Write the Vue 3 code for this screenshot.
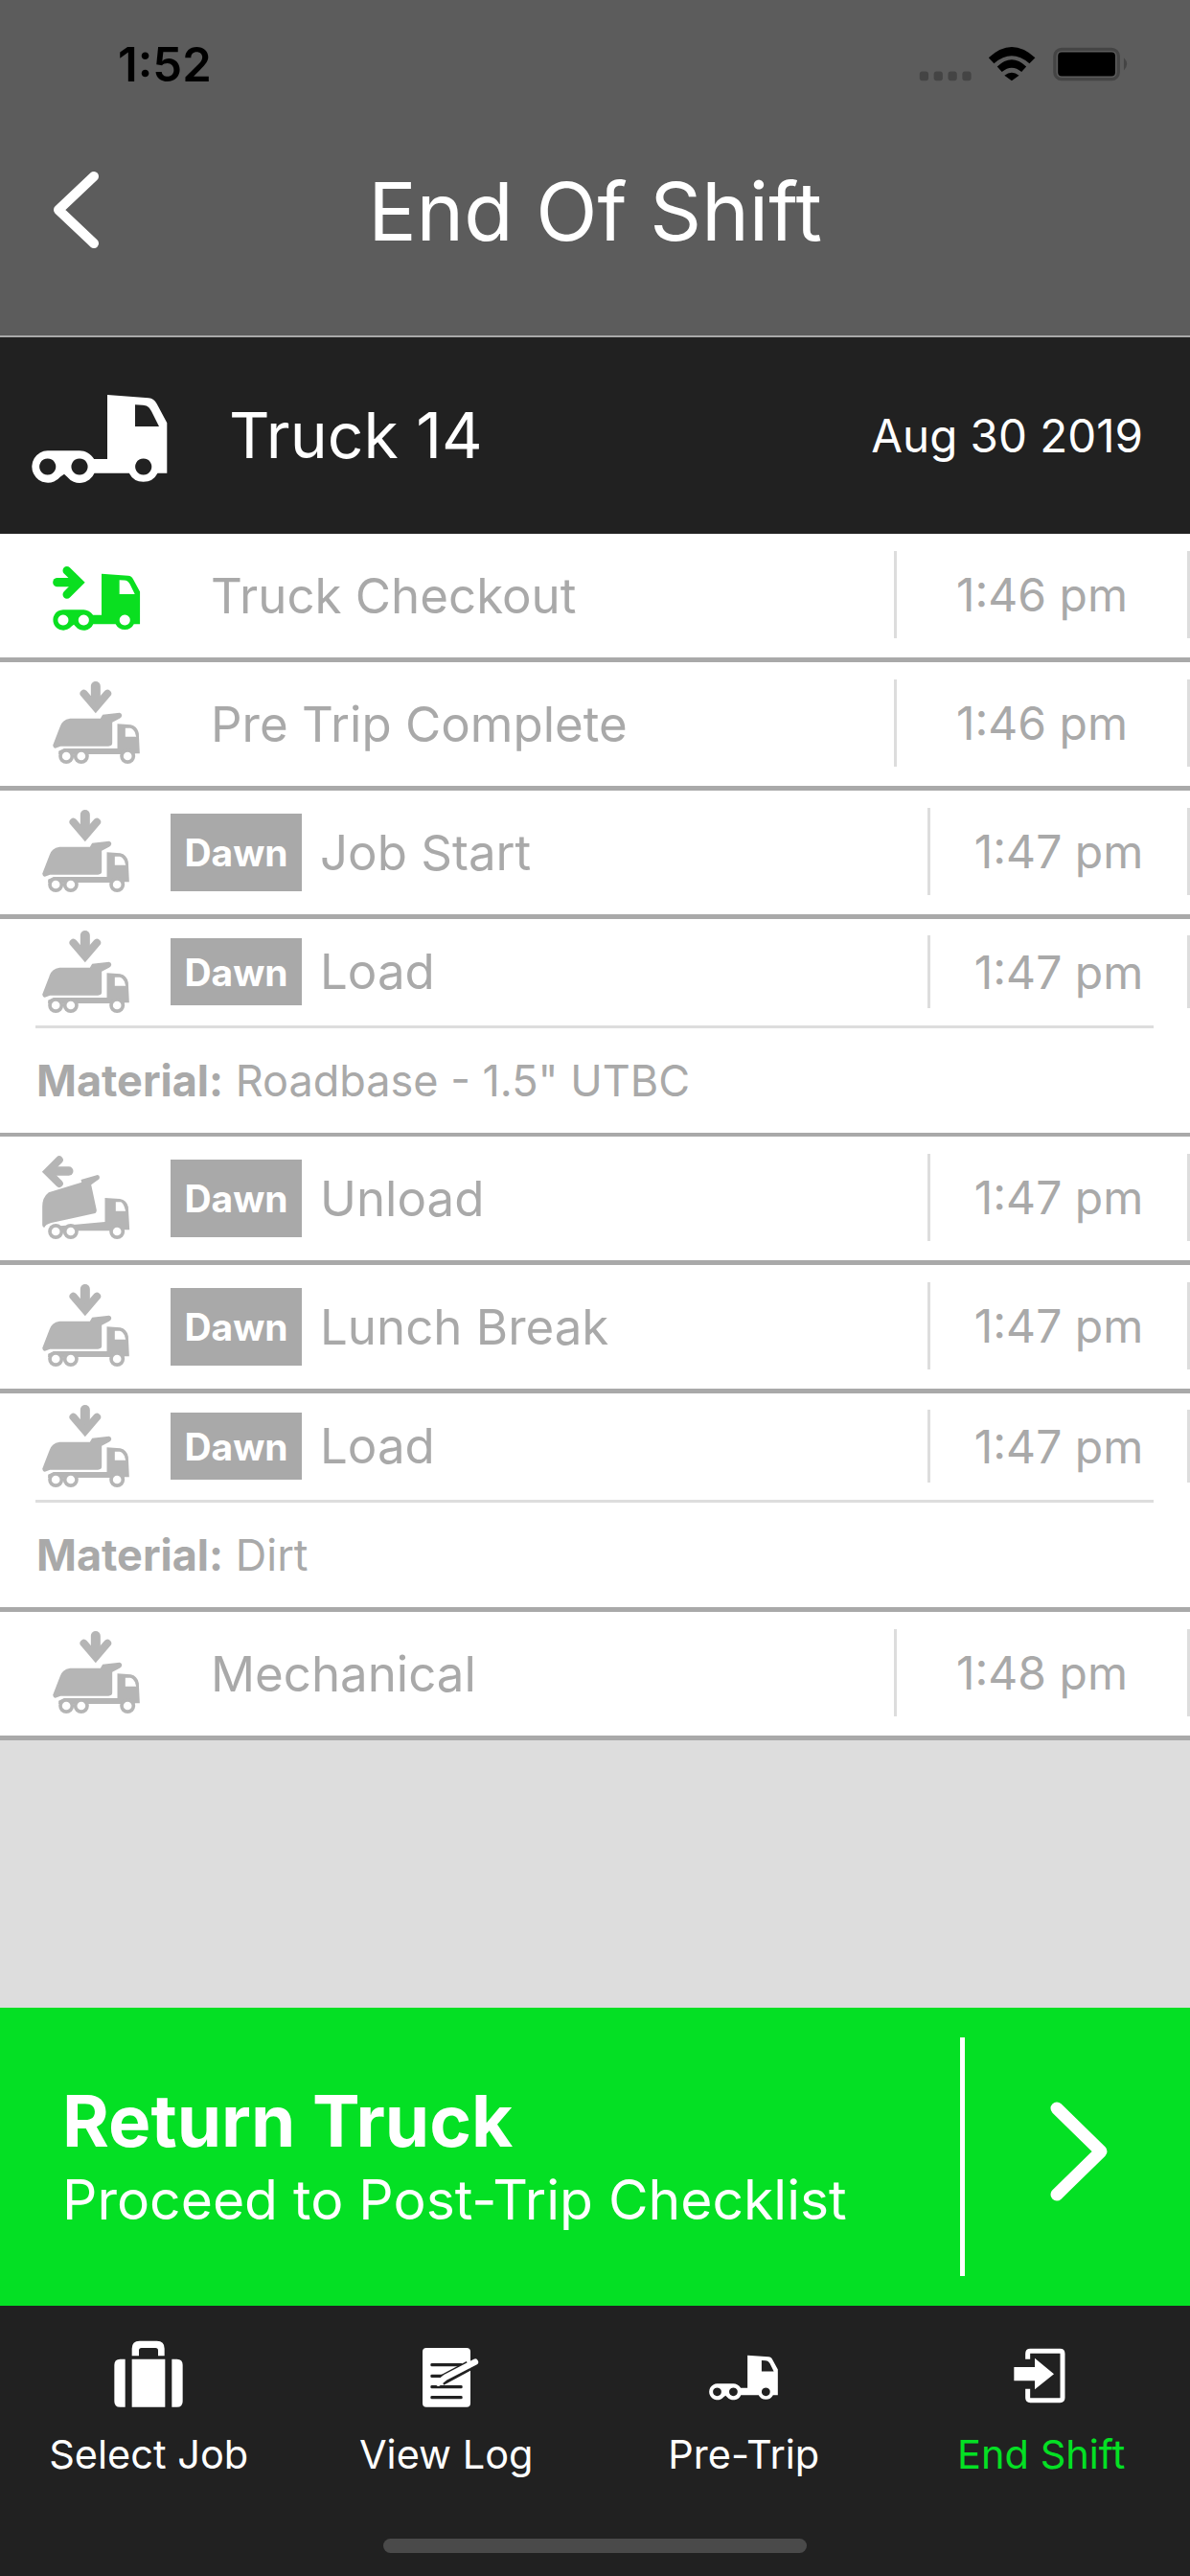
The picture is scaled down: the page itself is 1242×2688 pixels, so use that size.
<script setup>
const cab = 'M79 0L122 3.3C126 3.6 128.5 5.5 130.6 9.3L141.3 29.3V81.7H131.5A16.7 16.7 0 0 1 101.8 81.7H65.5A16.7 16.7 0 0 1 37 85.5L34 82.7L30 85.5A16.7 16.7 0 1 1 16.7 58.3H50C56 58.3 61.5 61.5 65.2 67H79ZM108 10.3V33H133L125 17C122.5 12.5 120 11 116 10.8ZM16.7 66.4A8.6 8.6 0 1 0 16.71 66.4ZM50 66.4A8.6 8.6 0 1 0 50.01 66.4ZM116.7 66.4A8.6 8.6 0 1 0 116.71 66.4Z'

const rows = [
  { icon: 'checkout', label: 'Truck Checkout', time: '1:46 pm' },
  { icon: 'load', label: 'Pre Trip Complete', time: '1:46 pm' },
  { icon: 'load', badge: 'Dawn', label: 'Job Start', time: '1:47 pm' },
  { icon: 'load', badge: 'Dawn', label: 'Load', time: '1:47 pm', material: 'Roadbase - 1.5" UTBC', thinBorder: true },
  { icon: 'unload', badge: 'Dawn', label: 'Unload', time: '1:47 pm' },
  { icon: 'load', badge: 'Dawn', label: 'Lunch Break', time: '1:47 pm' },
  { icon: 'load', badge: 'Dawn', label: 'Load', time: '1:47 pm', material: 'Dirt' },
  { icon: 'load', label: 'Mechanical', time: '1:48 pm' },
]
</script>

<template>
  <div class="screen">
    <header class="top">
      <div class="status">
        <span class="clock">1:52</span>
        <svg class="status-icons" viewBox="170 85 665 115" aria-hidden="true">
          <g fill="#444">
            <rect x="175" y="165" width="28" height="30" rx="9" />
            <rect x="220" y="165" width="28" height="30" rx="9" />
            <rect x="265" y="165" width="28" height="30" rx="9" />
            <rect x="310" y="165" width="28" height="30" rx="9" />
          </g>
          <path d="M393 122Q466 54 540 122L522 140Q466 92 410 140ZM420 150Q466 106 512 150L497 167Q466 140 435 167ZM443 178Q466 160 489 178L466 195Z" fill="#000" />
          <rect x="602" y="95" width="201" height="95" rx="22" fill="none" stroke="#444" stroke-width="10" />
          <rect x="612" y="105" width="181" height="75" rx="12" fill="#000" />
          <path d="M820 122Q830 132 830 142Q830 152 820 162Z" fill="#444" />
        </svg>
      </div>
      <div class="nav">
        <svg class="back" viewBox="0 0 48 80" aria-hidden="true">
          <path d="M43 5L6 40L43 75" fill="none" stroke="#fff" stroke-width="10" stroke-linecap="round" stroke-linejoin="round" />
        </svg>
        <h1 class="title">End Of Shift</h1>
      </div>
    </header>

    <section class="truck-bar">
      <svg class="truck-icon" viewBox="0 0 142 92" aria-hidden="true">
        <path :d="cab" fill="#fff" fill-rule="evenodd" />
      </svg>
      <span class="truck-name">Truck 14</span>
      <span class="truck-date">Aug 30 2019</span>
    </section>

    <main class="list">
      <article
        v-for="(row, i) in rows"
        :key="i"
        class="row"
        :class="{ 'row-thin': row.thinBorder }"
      >
        <div class="row-main" :class="{ 'has-badge': row.badge, 'has-material': row.material }">
          <svg v-if="row.icon === 'checkout'" class="row-icon" viewBox="76 20 272 258" aria-hidden="true">
            <g fill="none" stroke="#0adf20" stroke-linecap="round">
              <path d="M90 112H150" stroke-width="28" />
              <path d="M120 75L158 112L120 150" stroke-width="26" stroke-linejoin="miter" />
            </g>
            <path :d="cab" transform="translate(76 85) scale(1.93)" fill="#0adf20" fill-rule="evenodd" />
          </svg>
          <svg v-else-if="row.icon === 'load'" class="row-icon" viewBox="76 62 272 258" aria-hidden="true">
            <g fill="none" stroke="#b5b5b5" stroke-linecap="round">
              <path d="M210 77V130" stroke-width="30" />
              <path d="M173 100L210 143L247 100" stroke-width="24" />
            </g>
            <g fill="#b5b5b5">
              <path d="M76 262L98 205Q104 182 130 178H225L232 166L285 160Q293 162 292 170Q290 176 285 178L262 190V255Q262 265 250 265H100L84 271Q78 272 76 262Z" />
              <path d="M278 195L320 198Q340 202 345 225L348 288H332V290H94V280L112 272H278Z" />
              <circle cx="118" cy="296" r="24" />
              <circle cx="165" cy="296" r="24" />
              <circle cx="310" cy="296" r="24" />
            </g>
            <g fill="#fff">
              <path d="M303 208H318Q328 210 333 222L337 235H303Z" />
              <circle cx="118" cy="296" r="13" />
              <circle cx="165" cy="296" r="13" />
              <circle cx="310" cy="296" r="13" />
            </g>
          </svg>
          <svg v-else class="row-icon" viewBox="42 45 272 258" aria-hidden="true">
            <g fill="none" stroke="#b5b5b5" stroke-linecap="round">
              <path d="M125 93H72" stroke-width="28" />
              <path d="M95 58L58 95L95 132" stroke-width="24" />
            </g>
            <g fill="#b5b5b5">
              <path d="M42 262V205Q42 175 62 160L165 128L163 120L215 105Q224 106 220 118L195 136L212 215Q212 224 204 226L70 255Q52 260 48 270Q43 270 42 262Z" />
              <path d="M238 177L285 180Q306 184 311 205L315 277H295V280H75V276L65 268L238 252Z" />
              <circle cx="84" cy="282" r="24" />
              <circle cx="131" cy="282" r="24" />
              <circle cx="276" cy="282" r="24" />
            </g>
            <g fill="#fff">
              <path d="M272 190H288Q296 193 303 218H272Z" />
              <circle cx="84" cy="282" r="13" />
              <circle cx="131" cy="282" r="13" />
              <circle cx="276" cy="282" r="13" />
            </g>
          </svg>
          <span v-if="row.badge" class="badge">{{ row.badge }}</span>
          <span class="label">{{ row.label }}</span>
          <span class="time">{{ row.time }}</span>
        </div>
        <p v-if="row.material" class="material"><b>Material:</b> {{ row.material }}</p>
      </article>
    </main>

    <button class="action" type="button">
      <span class="action-text">
        <strong>Return Truck</strong>
        <span>Proceed to Post-Trip Checklist</span>
      </span>
      <svg class="action-arrow" viewBox="0 0 60 104" aria-hidden="true">
        <path d="M7 7L53 52L7 97" fill="none" stroke="#fff" stroke-width="13" stroke-linecap="round" stroke-linejoin="round" />
      </svg>
    </button>

    <nav class="tabs">
      <div class="tab">
        <svg class="tab-icon" viewBox="75 66 240 216" aria-hidden="true">
          <path fill="#fff" d="M143 115V92Q143 68 167 68H221Q245 68 245 92V115H225V98Q225 90 217 90H173Q165 90 165 98V115ZM143 125H247V275H143ZM122 125V275H106Q88 275 88 257V143Q88 125 106 125ZM268 125H284Q302 125 302 143V257Q302 275 284 275H268Z" />
        </svg>
        <span>Select Job</span>
      </div>
      <div class="tab">
        <svg class="tab-icon" viewBox="1008 66 240 216" aria-hidden="true">
          <rect x="1053" y="90" width="150" height="185" rx="12" fill="#fff" />
          <g fill="#212121">
            <rect x="1078" y="138" width="100" height="10" rx="4" />
            <rect x="1078" y="173" width="40" height="10" rx="4" />
            <rect x="1078" y="207" width="100" height="10" rx="4" />
            <rect x="1078" y="240" width="100" height="10" rx="4" />
          </g>
          <path d="M1112 192L1198 146" stroke="#212121" stroke-width="32" fill="none" />
          <path d="M1103 200L1125 182L1218 134" stroke="#fff" stroke-width="19" fill="none" stroke-linecap="round" />
        </svg>
        <span>View Log</span>
      </div>
      <div class="tab">
        <svg class="tab-icon" viewBox="108 66 240 216" aria-hidden="true">
          <path :d="cab" transform="translate(120 113) scale(1.525)" fill="#fff" fill-rule="evenodd" />
        </svg>
        <span>Pre-Trip</span>
      </div>
      <div class="tab tab-active">
        <svg class="tab-icon" viewBox="1041 66 240 216" aria-hidden="true">
          <path d="M1118 125V108Q1118 100 1126 100H1219Q1227 100 1227 108V246Q1227 254 1219 254H1126Q1118 254 1118 246V218" fill="none" stroke="#fff" stroke-width="15" />
          <path d="M1075 150H1140V122L1200 172L1140 220V193H1075Z" fill="#fff" />
        </svg>
        <span>End Shift</span>
      </div>
    </nav>
    <div class="home-wrap"><div class="home"></div></div>
  </div>
</template>

<style>
html, body { margin: 0; padding: 0; background: #ddd; }
</style>

<style scoped>
.screen {
  width: 1242px;
  height: 2688px;
  display: flex;
  flex-direction: column;
  background: #ddd;
  font-family: Inter, "Liberation Sans", sans-serif;
  color: #a9a9a9;
  overflow: hidden;
}
.top {
  height: 352px;
  box-sizing: border-box;
  background: #5c5c5c;
  border-bottom: 2px solid #a9a9a9;
  flex: none;
}
.status {
  height: 132px;
  display: flex;
  justify-content: space-between;
  align-items: flex-start;
  padding: 0 63px 0 123px;
  box-sizing: border-box;
}
.clock {
  margin-top: 38px;
  font-size: 49px;
  line-height: 60px;
  font-weight: 600;
  color: #000;
}
.status-icons {
  width: 222px;
  height: 38px;
  margin-top: 48px;
}
.nav {
  height: 218px;
  display: flex;
  align-items: center;
  position: relative;
  padding-bottom: 40px;
  box-sizing: border-box;
}
.back {
  width: 48px;
  height: 80px;
  margin-left: 55px;
  margin-bottom: 5px;
  flex: none;
}
.title {
  margin: 0;
  position: absolute;
  left: 0;
  right: 0;
  text-align: center;
  font-size: 84px;
  line-height: 100px;
  font-weight: 400;
  color: #fff;
}
.truck-bar {
  height: 205px;
  background: #212121;
  display: flex;
  align-items: center;
  flex: none;
  color: #fff;
  padding: 0 49px 0 33px;
}
.truck-icon {
  width: 142px;
  height: 92px;
  flex: none;
  margin-top: 7px;
}
.truck-name {
  margin-left: 64px;
  margin-bottom: 2px;
  font-size: 66px;
  line-height: 80px;
  flex: 1;
}
.truck-date {
  font-size: 47.5px;
  line-height: 56px;
}
.list {
  flex: 1;
  min-height: 0;
}
.row {
  background: #fff;
  border-bottom: 5px solid #a9a9a9;
}
.row-thin {
  border-bottom-width: 4px;
}
.row-main {
  height: 129px;
  display: flex;
  align-items: center;
  padding-left: 55px;
}
.row-main.has-badge {
  padding-left: 44px;
}
.row-icon {
  width: 91px;
  height: 86px;
  flex: none;
  margin-bottom: 4px;
  overflow: visible;
}
.label {
  flex: 1;
  font-size: 51px;
  line-height: 60px;
  margin-left: 74px;
  white-space: nowrap;
}
.has-badge .label {
  margin-left: 19px;
}
.badge {
  width: 137px;
  height: 81px;
  margin-left: 43px;
  flex: none;
  background: #a9a9a9;
  color: #fff;
  font-size: 39px;
  font-weight: 700;
  display: flex;
  align-items: center;
  justify-content: center;
}
.time {
  flex: none;
  box-sizing: border-box;
  width: 309px;
  height: 91px;
  margin-bottom: 3px;
  border-left: 3px solid #ddd;
  border-right: 3px solid #ddd;
  display: flex;
  align-items: center;
  justify-content: center;
  font-size: 48px;
}
.has-badge .time {
  width: 274px;
}
.has-material {
  height: 114px;
  background: linear-gradient(#ddd, #ddd) no-repeat 37px 100% / 1167px 3px;
}
.has-material .badge {
  height: 70px;
  margin-bottom: 4px;
}
.has-material .label {
  margin-bottom: 4px;
}
.has-material .time {
  height: 76px;
  margin-bottom: 4px;
}
.material {
  margin: 0;
  height: 109px;
  padding-left: 38px;
  display: flex;
  align-items: center;
  font-size: 45px;
  white-space: pre;
}
.material b {
  font-weight: 700;
}
.action {
  height: 311px;
  flex: none;
  border: 0;
  padding: 0;
  background: #04e024;
  display: flex;
  align-items: center;
  color: #fff;
  font-family: inherit;
  text-align: left;
}
.action-text {
  width: 1007px;
  box-sizing: border-box;
  height: 249px;
  padding-left: 65px;
  border-right: 5px solid #fff;
  display: flex;
  flex-direction: column;
  justify-content: center;
  margin-right: 89px;
}
.action-text strong {
  font-size: 74.5px;
  line-height: 88px;
  font-weight: 700;
}
.action-text span {
  font-size: 57px;
  line-height: 72px;
  margin-top: 3px;
}
.action-arrow {
  width: 60px;
  height: 104px;
  margin-bottom: 12px;
  flex: none;
}
.tabs {
  flex: none;
  height: 206px;
  background: #212121;
  display: grid;
  grid-template-columns: repeat(4, 1fr);
  padding-top: 36px;
  box-sizing: border-box;
}
.tab {
  display: flex;
  flex-direction: column;
  align-items: center;
  color: #fff;
  font-size: 41.5px;
  line-height: 50px;
  white-space: nowrap;
}
.tab-active {
  color: #04e024;
}
.tab-icon {
  width: 80px;
  height: 72px;
  margin-bottom: 22px;
  flex: none;
}
.home-wrap {
  flex: none;
  height: 76px;
  background: #212121;
  display: flex;
  justify-content: center;
  box-sizing: border-box;
  padding-top: 37px;
}
.home {
  width: 442px;
  height: 15px;
  border-radius: 8px;
  background: #4a4a4a;
}
</style>
